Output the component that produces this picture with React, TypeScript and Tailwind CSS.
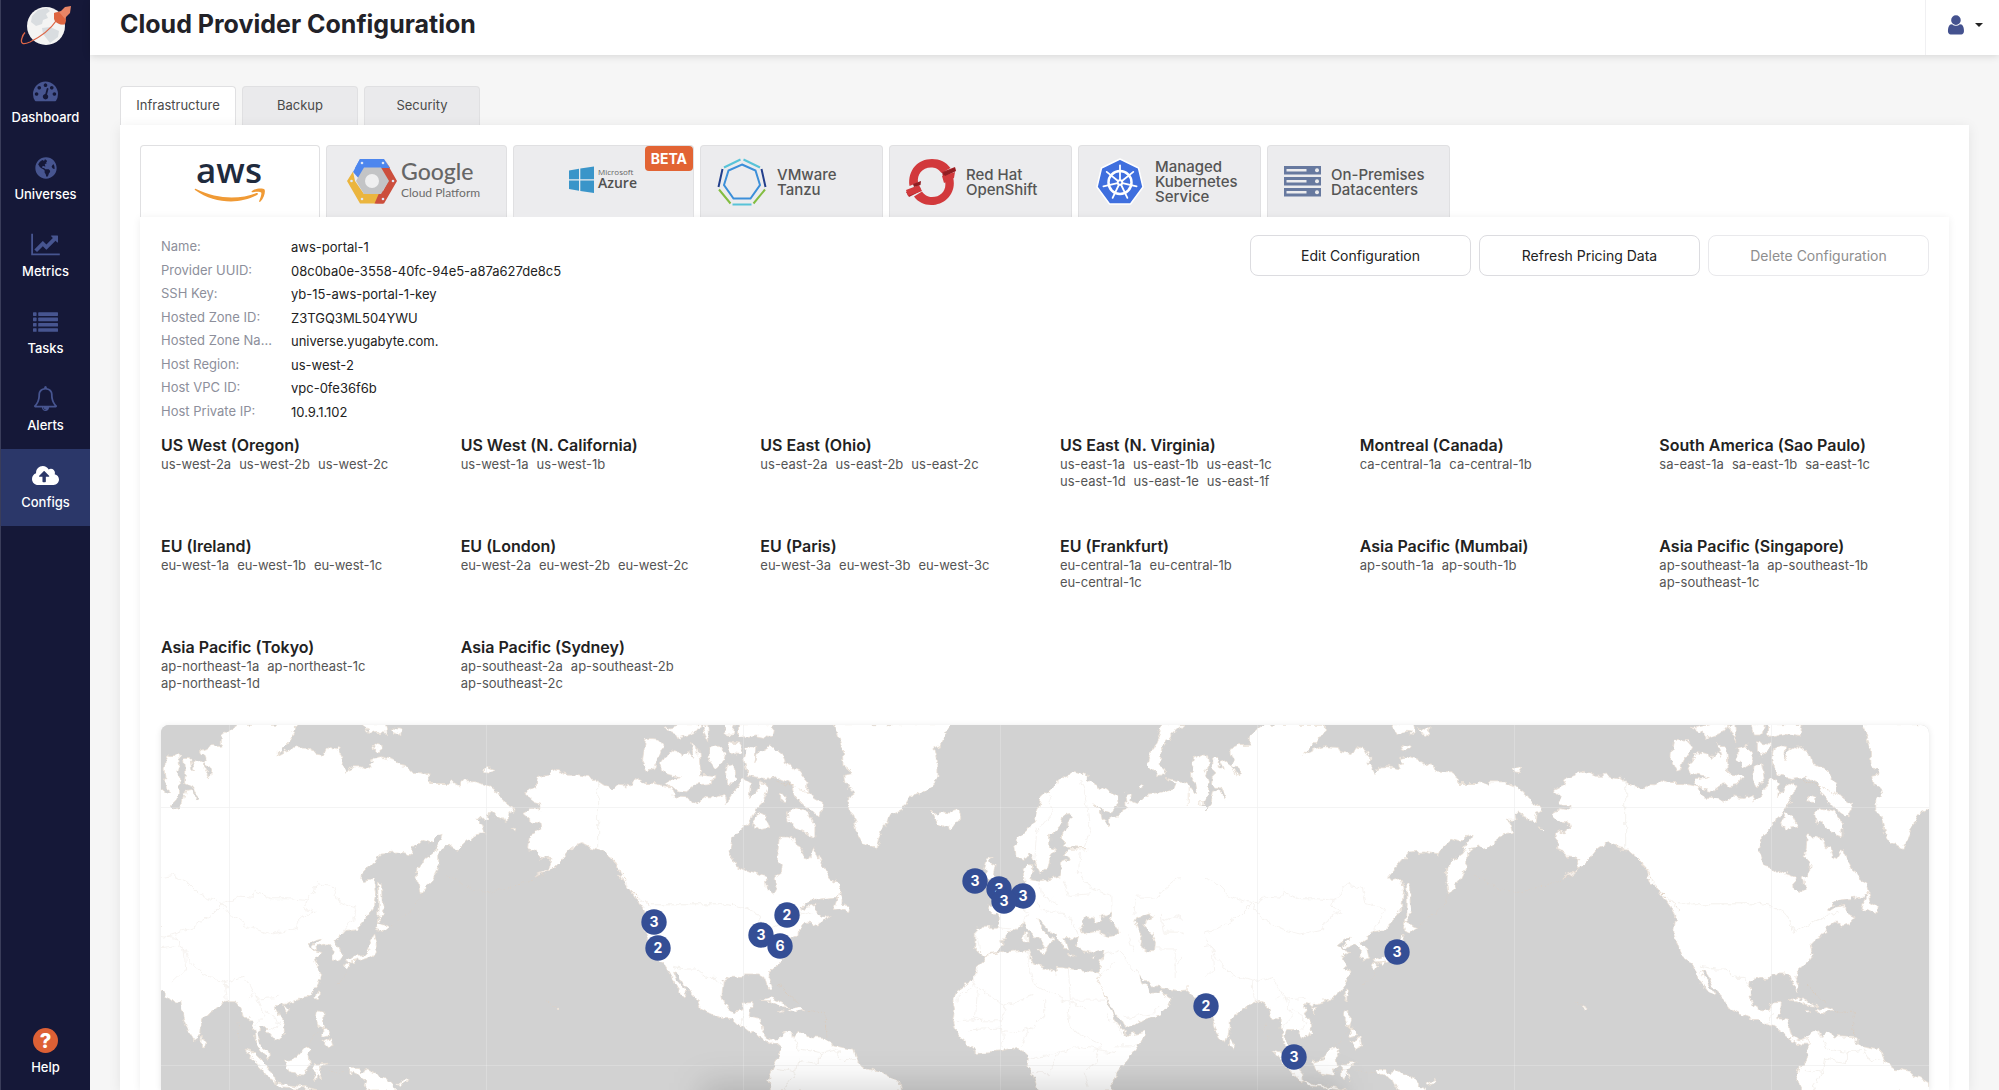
import React from "react";
import { FaCloudUploadAlt, FaGlobeAmericas } from "react-icons/fa";

const FONT = "font-['Inter','Liberation_Sans',sans-serif]";

/* ---------- sidebar icons ---------- */

const GaugeIcon = () => (
  <svg viewBox="0 0 1792 1792" className="size-[25px]" fill="currentColor">
    <path d="M384 1152q0-53-37.5-90.5t-90.5-37.5-90.5 37.5-37.5 90.5 37.5 90.5 90.5 37.5 90.5-37.5 37.5-90.5zm192-448q0-53-37.5-90.5t-90.5-37.5-90.5 37.5-37.5 90.5 37.5 90.5 90.5 37.5 90.5-37.5 37.5-90.5zm428 481l101-382q6-26-7.5-48.5t-38.5-29.5-48 6.5-30 39.5l-101 382q-60 5-107 43.5t-63 98.5q-20 77 20 146t117 89 146-20 89-117q16-60-6-117t-72-91zm660-33q0-53-37.5-90.5t-90.5-37.5-90.5 37.5-37.5 90.5 37.5 90.5 90.5 37.5 90.5-37.5 37.5-90.5zm-640-640q0-53-37.5-90.5t-90.5-37.5-90.5 37.5-37.5 90.5 37.5 90.5 90.5 37.5 90.5-37.5 37.5-90.5zm448 192q0-53-37.5-90.5t-90.5-37.5-90.5 37.5-37.5 90.5 37.5 90.5 90.5 37.5 90.5-37.5 37.5-90.5zm320 448q0 261-141 483-19 29-54 29h-1402q-35 0-54-29-141-221-141-483 0-182 71-348t191-286 286-191 348-71 348 71 286 191 191 286 71 348z" />
  </svg>
);

const ChartIcon = () => (
  <svg viewBox="0 0 2048 1792" className="h-[25px] w-[29px]" fill="currentColor">
    <path d="M2048 1536v128h-2048v-1536h128v1408h1920zM1920 288v435q0 21-19.5 29.5t-35.5-7.5l-121-121-633 633q-10 10-23 10t-23-10l-233-233-416 416-192-192 585-585q10-10 23-10t23 10l233 233 464-464-121-121q-16-16-7.5-35.5t29.5-19.5h435q14 0 23 9t9 23z" />
  </svg>
);

const ListIcon = () => (
  <svg viewBox="0 0 25 20" className="h-5 w-[25px]" fill="currentColor">
    {[0.3, 5.6, 10.9, 16.2].map((y) => (
      <g key={y}>
        <rect x="0" y={y} width="3.6" height="3.6" rx="0.6" />
        <rect x="5.2" y={y} width="19.8" height="3.6" rx="0.6" />
      </g>
    ))}
  </svg>
);

const BellIcon = () => (
  <svg viewBox="0 0 1792 1792" className="size-[25px]" fill="currentColor">
    <path d="M912 1696q0-16-16-16-59 0-101.5-42.5t-42.5-101.5q0-16-16-16t-16 16q0 73 51.5 124.5t124.5 51.5q16 0 16-16zm-666-288h1300q-266-300-266-832 0-51-24-105t-69-103-121.5-80.5-169.5-31.5-169.5 31.5-121.5 80.5-69 103-24 105q0 532-266 832zm1482 0q0 52-38 90t-90 38h-448q0 106-75 181t-181 75-181-75-75-181h-448q-52 0-90-38t-38-90q50-42 91-88t85-119.5 74.5-158.5 50-206 19.5-260q0-152 117-282.5t307-158.5q-8-19-8-39 0-40 28-68t68-28 68 28 28 68q0 20-8 39 190 28 307 158.5t117 282.5q0 139 19.5 260t50 206 74.5 158.5 85 119.5 91 88z" />
  </svg>
);

const UserIcon = () => (
  <svg viewBox="200 100 1400 1600" className="h-5 w-[18px]" fill="currentColor">
    <path d="M1536 1399q0 109-62.5 187t-150.5 78h-854q-88 0-150.5-78t-62.5-187q0-85 8.5-160.5t31.5-152 58.5-131 94-89 134.5-34.5q131 128 313 128t313-128q76 0 134.5 34.5t94 89 58.5 131 31.5 152 8.5 160.5zm-256-887q0 159-112.5 271.5t-271.5 112.5-271.5-112.5-112.5-271.5 112.5-271.5 271.5-112.5 271.5 112.5 112.5 271.5z" />
  </svg>
);

const BrandLogo = () => (
  <svg viewBox="0 0 52 40" className="h-10 w-[52px]" aria-hidden="true">
    <circle cx="26" cy="20" r="19" fill="#f4f4f3" />
    <path d="M12 10l6-6 9-2 3 3-4 3 2 4-5 2-1 4-6 2-5-4z" fill="#d9dde0" />
    <path d="M22 22l8-1 9 4-1 6-8 6-3-4-4-5z" fill="#d9dde0" />
    <path d="M36 15C30 24 20 31 10 36c-7 3-10 2-8-4 .5-2 1.500-4 3-5.500" fill="none" stroke="#dd6647" strokeWidth="1.300" />
    <path d="M34 7l7-2 4-4 6-1-1 7-4 4-1 7c-4 1-9-1-11-6z" fill="#e88566" />
    <path d="M34 7l5-1 7 8-1 4c-5 2-11-2-11-6z" fill="#de6540" />
  </svg>
);

/* ---------- provider logos ---------- */

const AwsLogo = () => (
  <svg viewBox="0 0 72 52" className="h-[52px] w-[72px] overflow-visible" role="img" aria-label="aws">
    <text x="35" y="29" textAnchor="middle" fontFamily="Open Sans, sans-serif" fontWeight="600" fontSize="35" fill="#1f2b3e">
      aws
    </text>
    <path d="M1 36C12 44 25 47.500 37 47.500c9 0 19-2.500 26-6.500 1.500-.8 1.200-2.500-.6-2C47 45 24 46 2 35c-1-.5-1.800.2-1 1z" fill="#f09a35" />
    <path d="M58 37c4-3 11-3.200 12.500-1.500 1.200 1.400-.4 8.600-4 12-.9.800-1.700.3-1.300-.6 1-2.300 2.700-7 2-8.300-.9-1.200-5.500-.8-8.200-.4-1.300.1-1.900-.5-1-1.200z" fill="#f09a35" />
  </svg>
);

const GoogleLogo = () => (
  <svg viewBox="0 0 140 48" className="h-12 w-[140px]" role="img" aria-label="Google Cloud Platform">
    <path d="M13 2h24l6 9H8z" fill="#4d86ee" />
    <path d="M13 2L6 15l8 9 8-13h12z" fill="#4d86ee" />
    <path d="M38 3l12 21-13 22.500h-8L36 34l5-10-8-13h10z" fill="#cc4f3d" />
    <path d="M6 14.500L0 24l13 22.500h16L33 37H17L8 24z" fill="#ebb53e" />
    <path d="M27.500 46.500L33 34h5l-2 12.500z" fill="#cc4f3d" />
    <path d="M17 10.500h17l8 13.500-8 13H17L9 24z" fill="#c3c4c6" />
    <circle cx="25" cy="24" r="7" fill="#efeff0" />
    <g fill="#dfe7f7">
      <circle cx="15" cy="6" r="1.300" />
      <circle cx="36" cy="6" r="1.300" />
      <circle cx="46" cy="24" r="1.300" />
      <circle cx="36" cy="42" r="1.300" />
      <circle cx="15" cy="42" r="1.300" />
      <circle cx="4.500" cy="24" r="1.300" />
    </g>
    <text x="54" y="23" fontFamily="Lato, sans-serif" fontSize="23" fontWeight="500" fill="#666">Google</text>
    <text x="54" y="40" fontFamily="Lato, sans-serif" fontSize="12" fill="#6c6c6c">Cloud Platform</text>
  </svg>
);

const AzureLogo = () => (
  <svg viewBox="0 0 70 28" className="h-7 w-[70px] overflow-visible" role="img" aria-label="Microsoft Azure">
    <path d="M0 4.500l10-1.700v10.400H0zM11.300 2.600L25 .4v12.800H11.300zM0 14.400h10v10.300L0 23.100zM11.300 14.400H25V27l-13.700-2z" fill="#3a95c9" />
    <text x="29" y="9" fontFamily="Open Sans, sans-serif" fontSize="8" fill="#666">Microsoft</text>
    <text x="29" y="22" fontFamily="Open Sans, sans-serif" fontWeight="600" fontSize="14" fill="#505050">Azure</text>
  </svg>
);

const TanzuLogo = () => (
  <svg viewBox="0 0 50 50" className="size-[50px]" fill="none" strokeWidth="2">
    <path d="M25 7.500L38.500 13.500 43 28 33.500 41.500H16.500L7 28 11.500 13.500z" stroke="#3c8fd9" />
    <path d="M7 10.500L23.500 2.500M26.500 2.500L43 10.500M15.500 47.500H34.500" stroke="#58c3d8" />
    <path d="M5.500 12L1.500 30M44.500 12L48.500 30" stroke="#223f8c" />
    <path d="M2 32.500L13.500 46.500M48 32.500L36.500 46.500" stroke="#83bd41" />
  </svg>
);

const OpenShiftLogo = () => (
  <svg viewBox="0 0 50 48" className="h-12 w-[50px]">
    <path d="M3.500 28C1.500 12 12 1 26 1c8 0 14 3 18.500 9l-9 5C32 10.500 29 9.500 25 9.500c-9 0-14 7-13 15z" fill="#d2393c" />
    <path d="M47 19c4 15-7 28-22 28-7 0-13-3-17-8.500l8-5c3 4 6 5.500 10 5.500 9 0 15-7 13-16z" fill="#d2393c" />
    <path d="M36 14l13-5 1 4-13 6zM0 34l14-5 1 4-12 6z" fill="#a82127" />
    <path d="M36 18l13-4-1 6-10 5zM0 32l13-5 3 6-14 5z" fill="#d2393c" />
    <path d="M37 15l12-5 .5 3L39 18zM7 26l8-3-.5 4L8 29z" fill="#8f1e22" />
  </svg>
);

const SPOKES = [0, 1, 2, 3, 4, 5, 6].map((i) => (i * 360) / 7);

const KubernetesLogo = () => (
  <svg viewBox="0 0 50 50" className="size-[50px]" fill="none">
    <path d="M25 2L43.500 11 48 30 35.500 47H14.500L2 30 6.500 11z" fill="#3f6fde" stroke="#fff" strokeWidth="1.500" strokeLinejoin="round" />
    <circle cx="25" cy="25.500" r="11.500" stroke="#fff" strokeWidth="2.500" />
    <circle cx="25" cy="25.500" r="3.200" fill="#fff" />
    {SPOKES.map((a) => (
      <g key={a} transform={`rotate(${a} 25 25.500)`}>
        <path d="M25 23V8.500" stroke="#fff" strokeWidth="1.800" strokeLinecap="round" />
      </g>
    ))}
    <circle cx="25" cy="25.500" r="1.200" fill="#3f6fde" />
  </svg>
);

const ServersIcon = () => (
  <svg viewBox="0 0 37 31" className="h-[31px] w-[37px]">
    {[0, 11, 22].map((y) => (
      <g key={y}>
        <rect x="0" y={y} width="37" height="8.500" fill="#67799f" />
        <rect x="2.500" y={y + 3} width="20" height="2.500" fill="#ececee" />
        <circle cx="33" cy={y + 4.200} r="2" fill="#ececee" />
      </g>
    ))}
  </svg>
);

/* ---------- world map ---------- */

const EAST_ASIA =
  "M-2,215L18,235 24,232 20,205 10,190 8,160 15,125 30,118 50,122 52,150 45,175 52,205 52,235 40,255 28,270 45,282 58,262 65,225 80,222 90,250 95,250 88,222 72,212 62,205 65,170 62,130 75,130 80,160 90,165 80,140 92,135 110,150 125,185 130,160 108,145 115,135 105,105 130,95 155,93 155,65 180,40 195,28 345,28 345,45 325,80 290,120 315,105 345,95 380,97 385,112 415,118 425,95 450,102 460,125 458,145 473,175 485,155 510,155 535,162 530,148 548,143 535,130 560,125 590,135 605,150 625,155 630,168 665,170 680,180 682,205 735,205 740,200 760,215 760,200 800,200 830,215 860,240 870,262 890,275 895,290 880,300 878,322 860,310 832,290 828,300 830,312 800,312 815,325 822,355 800,358 775,380 755,402 740,392 722,395 705,410 705,440 700,465 690,490 678,505 665,532 658,538 655,510 650,490 652,460 665,435 690,415 705,390 716,357 705,360 688,380 665,372 640,400 632,418 600,410 560,413 545,430 505,485 515,498 540,492 545,530 540,580 520,610 495,640 470,645 455,665 440,675 440,685 455,700 460,725 445,735 437,730 438,705 425,685 402,690 395,700 388,695 408,668 395,672 375,690 395,705 410,708 390,728 395,745 408,770 400,805 385,830 370,845 340,855 320,862 318,870 300,860 292,875 300,900 312,925 315,950 300,962 290,970 280,958 262,935 250,935 245,960 252,985 270,1000 275,1030 255,1010 242,985 238,950 232,910 212,908 205,880 190,855 175,855 155,865 130,890 105,912 103,950 95,975 85,975 72,950 60,910 52,880 50,855 38,865 20,845 0,820 -2,820Z";
const EAST_ASIA_ISLES =
  "M550,500L560,505 562,560 568,595 555,600 556,620 550,620 552,560ZM548,620L578,633 560,650 545,645ZM543,655L550,690 540,715 520,728 500,735 480,742 470,735 490,725 512,720 528,700 535,670ZM468,742L480,745 472,765 465,755ZM484,738L500,737 492,747ZM402,825L406,830 400,852 394,840ZM312,873L328,875 320,888ZM105,965L116,985 112,997 102,990ZM215,1003L235,1008 262,1040 290,1075 292,1098 272,1085 250,1055ZM290,1100L330,1108 370,1113 400,1122 300,1112ZM315,1035L340,1028 370,990 385,1000 375,1025 378,1050 365,1078 325,1070ZM398,885L410,890 408,920 416,935 400,930 395,910ZM412,980L435,965 440,990 425,997ZM410,930L425,945 430,960 415,965ZM388,1045L428,1042 403,1055 412,1095 400,1075 395,1098 388,1080ZM472,1058L500,1058 505,1072 530,1065 570,1085 600,1125 530,1125 515,1090 480,1070ZM600,1100L630,1090 625,1100 605,1106ZM537,88L560,95 555,107 540,105ZM515,26L570,26 575,55 550,52 530,58ZM582,38L612,45 608,60 588,52ZM816,163L830,154 845,160 838,172 822,170ZM885,338L903,340 900,347ZM1000,872L1007,876 1002,881Z";
const NORTH_AMERICA =
  "M475,230L500,215 505,190 525,180 545,165 575,180 600,180 640,190 665,210 690,220 700,210 720,212 745,190 765,205 790,205 830,215 840,245 880,248 890,265 915,245 940,250 965,240 970,262 985,235 1000,205 1010,190 1030,205 1025,250 1040,230 1050,200 1065,205 1070,220 1060,250 1045,275 1035,300 1025,310 1015,330 1000,345 985,370 977,405 985,425 992,450 1020,465 1050,478 1065,485 1068,520 1082,533 1090,515 1085,485 1103,470 1105,445 1090,425 1095,400 1098,362 1120,362 1135,375 1140,395 1152,400 1160,425 1172,430 1185,400 1195,430 1210,465 1225,490 1245,505 1250,530 1235,545 1200,550 1170,555 1145,590 1165,575 1190,570 1190,595 1210,605 1220,600 1200,625 1180,632 1178,620 1165,620 1150,630 1145,655 1120,670 1105,690 1112,720 1100,740 1075,765 1072,785 1080,815 1075,825 1065,810 1060,785 1045,775 1015,775 1005,785 980,785 960,795 957,840 965,870 985,885 1005,883 1010,862 1032,860 1025,905 1052,910 1055,940 1060,965 1080,975 1100,968 1100,985 1080,985 1060,974 1035,950 1015,932 995,925 980,908 960,908 930,895 905,880 895,850 870,820 855,790 848,768 836,764 845,790 860,815 874,840 868,843 855,830 840,805 828,770 815,745 795,730 780,690 770,650 775,600 765,580 745,545 730,520 712,500 700,460 685,430 660,405 635,400 610,385 590,395 580,405 565,430 545,455 520,475 495,485 530,465 540,430 510,425 500,405 480,400 485,355 515,340 512,320 490,318 468,295 490,280 515,285 515,270 492,265 490,245Z";
const ARCTIC_ISLES =
  "M770,72L800,75 815,95 795,135 790,160 775,165 762,135ZM830,110L855,115 860,130 875,110 888,130 880,85 900,105 905,180 940,185 930,205 890,210 870,230 840,225 820,205 830,190 855,185 815,175 805,150ZM925,100L950,90 965,120 960,145 940,160 925,135ZM975,80L1005,85 1000,110 985,125 975,110ZM970,150L985,145 992,190 975,215 965,190ZM1015,100L1030,92 1045,95 1040,140 1050,110 1075,92 1105,120 1110,145 1145,165 1170,205 1170,235 1210,270 1195,305 1165,280 1150,260 1135,240 1125,205 1090,185 1060,190 1020,180 1010,130ZM1130,280L1165,290 1185,330 1185,370 1160,350 1120,320 1115,290ZM1032,330L1045,290 1060,300 1075,335 1045,340ZM1100,240L1115,245 1112,262 1102,260ZM1000,26L1085,26 1080,68 1040,60 1000,68ZM960,26L990,26 985,60 965,60ZM905,38L920,26 922,80ZM815,40L870,26 910,26 895,50 850,70 840,50ZM1230,585L1245,530 1252,560 1272,575 1268,595 1245,582ZM1050,854L1075,845 1110,865 1125,875 1100,872 1075,855ZM1120,885L1145,875 1165,885 1140,892ZM1093,887L1108,889 1098,893ZM548,872L556,876 550,882Z";
const GREENLAND =
  "M188,26L480,26 468,60 458,90 440,100 450,150 450,190 430,215 405,235 375,245 355,285 325,300 315,335 300,370 293,403 262,385 245,350 235,300 222,285 222,250 240,235 215,205 212,180 235,175 210,150 208,95Z";
const SOUTH_AMERICA =
  "M45,968L60,950 78,945 88,965 97,945 120,962 165,965 185,990 235,1000 245,1040 270,1060 310,1070 355,1100 358,1128 30,1128 22,1090 35,1050 50,1020 48,985Z";
const EUROPE =
  "M800,170L830,180 830,195 870,220 905,245 905,275 885,290 860,280 842,265 862,290 865,315 882,330 885,308 905,305 910,290 930,280 925,235 940,232 935,262 950,270 975,240 1010,235 1045,222 1050,205 1030,190 1050,195 1080,205 1102,238 1120,255 1120,830 1090,822 1060,825 1020,818 1010,812 990,810 975,795 960,775 965,800 980,815 985,835 1000,835 1018,820 1020,835 1040,850 1030,875 1010,900 970,915 925,938 915,915 895,890 880,855 865,820 850,785 848,775 858,765 868,720 870,705 845,712 815,705 800,690 805,670 790,665 770,670 782,705 770,705 760,685 750,665 735,650 715,625 700,610 705,630 725,655 745,675 735,680 725,705 720,690 700,665 680,640 665,625 640,640 625,655 605,690 600,710 570,718 555,705 543,705 545,635 600,635 600,605 575,575 580,570 600,570 620,555 650,530 670,500 668,460 675,445 690,445 685,490 715,495 760,480 765,440 785,430 770,415 780,402 825,400 765,395 765,350 790,310 785,292 768,295 760,330 735,360 735,400 745,405 730,430 725,460 708,475 695,440 690,415 665,432 650,425 645,375 675,345 700,300 710,245 740,215 770,185Z";
const EUROPE_ISLES =
  "M575,430L590,425 580,440 595,450 590,480 620,510 630,540 600,545 575,548 590,530 580,515 590,505 575,490 568,460ZM545,490L565,485 570,520 545,530ZM435,285L450,300 455,285 480,290 500,285 508,305 495,325 475,340 450,325 440,300ZM1020,26L1070,26 1040,60 1015,105 1012,150 1025,180 1005,180 982,150 990,110ZM672,645L678,650 678,682 668,682 670,660ZM698,698L725,700 718,714ZM780,720L800,722 790,728ZM835,725L850,720 842,730ZM955,212L965,207 970,216 960,225Z";
const AFRICA =
  "M570,720L600,712 640,710 680,705 690,740 720,755 745,772 755,755 790,760 855,768 862,775 850,785 870,830 880,870 900,915 920,945 930,958 975,945 975,960 950,1005 905,1065 892,1100 893,1128 705,1128 690,1075 675,1055 680,1015 645,995 610,1005 550,1010 520,980 495,945 488,915 492,880 488,855 500,825 540,790 545,755 565,735Z";
const INLAND_SEAS =
  "M825,600L845,605 850,620 865,612 862,602 892,590 885,615 905,635 908,655 880,660 850,648 815,655 812,640ZM955,605L985,592 992,605 975,615 970,630 990,655 1000,680 998,705 980,705 965,695 968,665 955,640 948,620Z";

const ASIA_BORDERS =
  "M0,485L30,478 65,495 100,538 160,565 185,605 230,640 285,655 340,640 355,605 390,590 365,575 370,555 330,550 280,550 240,528 235,548 200,545 160,565 130,600 80,640 10,665M370,555L400,505 440,515 450,560 497,578 490,610 460,655M0,700L60,690 70,730 110,780 165,800 215,785 235,830 225,850M60,690L65,760 30,800M165,800L170,855M0,660L40,665 55,690M245,850L300,845M240,830L265,900 240,930M265,880L290,900 300,930 275,945";
const AMERICA_BORDERS =
  "M780,565L975,565 1010,575 1050,600 1065,655 1110,620 1135,610 1145,595M835,752L870,760 895,760 920,785 940,785 960,815M652,190L652,400M1010,895L1000,925M1145,600L1175,590";
const EUROPE_BORDERS =
  "M700,340L695,430M730,240L740,290 700,350M810,195L825,260 835,350 820,395M810,410L805,470 835,520 890,540 890,590M765,490L780,540 835,535M710,500L715,540 760,570M545,640L555,700M600,635L630,640M640,560L680,590 665,625M700,560L720,590 770,590 800,640 805,660M945,600L950,545 1000,545 1060,485 1120,480M1015,600L1020,650 1060,650 1115,680M1000,700L1050,700 1050,790M870,720L905,705 945,755 960,775M930,660L945,705M1015,620L1050,600 1120,640M1050,750L1100,700 1120,720M860,780L900,740M925,905L990,895 1010,870";
const AFRICA_BORDERS =
  "M680,705L680,745 690,800 755,845 825,880M780,760L785,853 870,853M550,755L540,805 495,855M540,805L620,870 690,840M565,910L495,915M620,870L610,915 565,915 545,905 550,820M610,930L615,995M720,850L720,900 680,940 660,990M785,853L780,920 800,950 860,985M680,1030L760,1010 800,990 900,1010M760,1010L730,1070 690,1070M900,990L950,990M860,985L850,1040 820,1070 830,1120M870,900L900,920 915,950M530,945L600,940 640,950 700,930";
const SOUTH_AMERICA_BORDERS =
  "M78,950L100,1000 150,1010 150,1040 95,1030 90,1070 40,1060M150,1010L190,1000 210,1040 240,1030M90,1070L60,1125";
const ISLAND_ARCS =
  "M970,478L900,512 830,532 780,515 725,480M665,535L640,580 580,635M475,770L440,815M410,935L370,990M195,920L200,970M380,1060L470,1070M975,855L1000,872M230,1020L290,1105";
const AMERICA_ARCS = "M685,425L730,520 782,580M1095,808L1140,858M1170,888L1210,890 1212,960M1090,195L1170,235";

const Asia = () => (
  <g transform="translate(-1 -10) scale(.3954 .3342)">
    <path d={EAST_ASIA + EAST_ASIA_ISLES} />
    <path d={ASIA_BORDERS} fill="none" stroke="#f3efea" />
    <path d={ISLAND_ARCS} fill="none" stroke="#dccfc2" strokeDasharray="3 5" />
  </g>
);

const America = () => (
  <g transform="translate(1199 -10) scale(.4075 .3342)">
    <path d={NORTH_AMERICA + ARCTIC_ISLES} />
    <path d={AMERICA_BORDERS} fill="none" stroke="#f0ece6" />
    <path d={AMERICA_ARCS} fill="none" stroke="#dcc9b6" strokeDasharray="4 3" />
  </g>
);

const Atlantic = () => (
  <g transform="translate(599 -10) scale(.3954 .3342)">
    <path d={GREENLAND + SOUTH_AMERICA} />
    <path d={SOUTH_AMERICA_BORDERS} fill="none" stroke="#f0ece6" />
  </g>
);

const EuropeAfrica = () => (
  <g transform="translate(599 -10) scale(.3954 .3342)">
    <path d={EUROPE} />
    <path d={AFRICA} />
    <path d={EUROPE_ISLES} />
    <path d={INLAND_SEAS} fill="#d2d2d2" />
    <path d={EUROPE_BORDERS + AFRICA_BORDERS} fill="none" stroke="#f3efea" />
  </g>
);

const GRATICULE =
  "M68.500 0V365M325.500 0V365M582.500 0V365M839.500 0V365M1096.500 0V365M1353.500 0V365M1610.500 0V365M0 82.500H1768M0 340.500H1768";

const PINS: [number, number, number][] = [
  [493, 197, 3],
  [497, 223, 2],
  [600, 210, 3],
  [626, 190, 2],
  [619, 221, 6],
  [814, 156, 3],
  [838, 164, 3],
  [862, 171, 3],
  [843, 176, 3],
  [1045, 281, 2],
  [1133, 332, 3],
  [1236, 227, 3],
];

const WorldMap = () => (
  <svg
    viewBox="0 0 1768 365"
    preserveAspectRatio="xMidYMin slice"
    className="block min-h-[365px] w-full flex-1 rounded-t-lg bg-[#d2d2d2] shadow-[0_1px_6px_rgba(0,0,0,0.1)]"
    role="img"
    aria-label="Map of provider regions"
  >
    <defs>
      <filter id="coast" x="0" y="0" width="100%" height="100%" filterUnits="userSpaceOnUse">
        <feTurbulence type="fractalNoise" baseFrequency="0.12" numOctaves="3" seed="4" />
        <feDisplacementMap in="SourceGraphic" scale="8" xChannelSelector="R" yChannelSelector="G" />
      </filter>
      <filter id="soft" x="-20%" y="-100%" width="140%" height="300%">
        <feGaussianBlur stdDeviation="16" />
      </filter>
    </defs>
    <g filter="url(#coast)" fill="#fff" stroke="#eadfd3" strokeWidth="2">
      <rect x="-20" y="-20" width="1808" height="405" fill="#d2d2d2" stroke="none" />
      <g transform="translate(-1028 0)">
        <America />
      </g>
      <Asia />
      <Atlantic />
      <EuropeAfrica />
      <g transform="translate(1028 0)">
        <Asia />
        <Atlantic />
      </g>
      <rect x="1022" y="82" width="22" height="178" stroke="none" />
      <America />
    </g>
    <path d={GRATICULE} stroke="#c8c8c8" strokeOpacity="0.25" />
    <path d={GRATICULE} stroke="#fff" strokeOpacity="0.25" />
    <rect x="540" y="358" width="640" height="60" fill="#000" fillOpacity="0.15" filter="url(#soft)" />
    {PINS.map(([x, y, n]) => (
      <g key={`${x}-${y}`}>
        <circle cx={x} cy={y} r="12.700" fill="#344e95" />
        <text x={x} y={y + 5} textAnchor="middle" fontFamily="Inter, sans-serif" fontSize="14" fontWeight="700" fill="#fff">
          {n}
        </text>
      </g>
    ))}
  </svg>
);

/* ---------- data ---------- */

const NAV = [
  { label: "Dashboard", icon: <GaugeIcon /> },
  { label: "Universes", icon: <FaGlobeAmericas className="size-[22px]" /> },
  { label: "Metrics", icon: <ChartIcon /> },
  { label: "Tasks", icon: <ListIcon /> },
  { label: "Alerts", icon: <BellIcon /> },
  { label: "Configs", icon: <FaCloudUploadAlt className="size-[27px]" />, active: true },
];

const DETAILS = [
  ["Name:", "aws-portal-1"],
  ["Provider UUID:", "08c0ba0e-3558-40fc-94e5-a87a627de8c5"],
  ["SSH Key:", "yb-15-aws-portal-1-key"],
  ["Hosted Zone ID:", "Z3TGQ3ML504YWU"],
  ["Hosted Zone Name:", "universe.yugabyte.com."],
  ["Host Region:", "us-west-2"],
  ["Host VPC ID:", "vpc-0fe36f6b"],
  ["Host Private IP:", "10.9.1.102"],
];

const REGIONS: [string, string[]][] = [
  ["US West (Oregon)", ["us-west-2a", "us-west-2b", "us-west-2c"]],
  ["US West (N. California)", ["us-west-1a", "us-west-1b"]],
  ["US East (Ohio)", ["us-east-2a", "us-east-2b", "us-east-2c"]],
  ["US East (N. Virginia)", ["us-east-1a", "us-east-1b", "us-east-1c", "us-east-1d", "us-east-1e", "us-east-1f"]],
  ["Montreal (Canada)", ["ca-central-1a", "ca-central-1b"]],
  ["South America (Sao Paulo)", ["sa-east-1a", "sa-east-1b", "sa-east-1c"]],
  ["EU (Ireland)", ["eu-west-1a", "eu-west-1b", "eu-west-1c"]],
  ["EU (London)", ["eu-west-2a", "eu-west-2b", "eu-west-2c"]],
  ["EU (Paris)", ["eu-west-3a", "eu-west-3b", "eu-west-3c"]],
  ["EU (Frankfurt)", ["eu-central-1a", "eu-central-1b", "eu-central-1c"]],
  ["Asia Pacific (Mumbai)", ["ap-south-1a", "ap-south-1b"]],
  ["Asia Pacific (Singapore)", ["ap-southeast-1a", "ap-southeast-1b", "ap-southeast-1c"]],
  ["Asia Pacific (Tokyo)", ["ap-northeast-1a", "ap-northeast-1c", "ap-northeast-1d"]],
  ["Asia Pacific (Sydney)", ["ap-southeast-2a", "ap-southeast-2b", "ap-southeast-2c"]],
];

/* ---------- pieces ---------- */

const TAB = "rounded-t border border-b-0 border-[#e0e0e2]";
const NAV_LABEL = "text-[13px] leading-4 font-medium text-white";

const ProviderTab = ({ icon, lines }: { icon: React.ReactNode; lines: string[] }) => (
  <button role="tab" aria-selected="false" className={`${TAB} flex h-[72px] w-[183px] items-center gap-2.5 bg-[#ececee] pl-4 text-left`}>
    {icon}
    <span className="flex flex-col text-[15px] leading-[15px] font-medium text-[#555]">
      {lines.map((l) => (
        <span key={l}>{l}</span>
      ))}
    </span>
  </button>
);

const ActionButton = ({ children, disabled }: { children: string; disabled?: boolean }) => (
  <button
    disabled={disabled}
    className="h-[41px] w-[221px] rounded-lg border border-[#dcdce0] bg-white text-sm text-[#222] disabled:border-[#e9e9ec] disabled:text-[#8e8e8e]"
  >
    {children}
  </button>
);

export default function App() {
  return (
    <div className={`flex min-h-screen bg-[#f6f6f6] ${FONT} text-[#222]`}>
      <aside className="flex w-[90px] shrink-0 flex-col border-l border-[#3a3d5a] bg-[#151838]">
        <a href="#home" aria-label="Home" className="flex h-16 justify-center pt-1.5">
          <BrandLogo />
        </a>
        <nav className="flex flex-col">
          {NAV.map((n) => (
            <a
              key={n.label}
              href={`#${n.label.toLowerCase()}`}
              className={`flex h-[77px] flex-col items-center pt-3.5 ${n.active ? "bg-[#2b3769] text-white" : "text-[#475590]"}`}
            >
              <span className="flex h-[25px] items-center">{n.icon}</span>
              <span className={`mt-1.5 ${NAV_LABEL}`}>{n.label}</span>
            </a>
          ))}
        </nav>
        <a href="#help" className="mt-auto mb-[15px] flex flex-col items-center">
          <span className="flex size-[25px] items-center justify-center rounded-full bg-[#dd6035] text-[20px] leading-none font-extrabold text-white">?</span>
          <span className={`mt-1.5 ${NAV_LABEL}`}>Help</span>
        </a>
      </aside>

      <div className="flex min-w-0 flex-1 flex-col">
        <header className="z-10 flex h-[55px] shrink-0 items-stretch justify-between bg-white pl-[30px] shadow-[0_1px_8px_rgba(0,0,0,0.14)]">
          <h1 className="pt-1.5 text-[25px] leading-9 font-bold text-[#222228]">Cloud Provider Configuration</h1>
          <button aria-label="User menu" className="flex w-[74px] items-center gap-2.5 border-l border-[#f0f0f2] pb-1.5 pl-[21px] text-[#44528f]">
            <UserIcon />
            <span className="border-x-4 border-t-4 border-x-transparent border-t-[#222]" />
          </button>
        </header>

        <main className="flex flex-1 flex-col px-[30px] pt-[31px]">
          <div role="tablist" className="flex gap-1.5 text-[13px] text-[#4a4a4a]">
            <button role="tab" aria-selected="true" className={`${TAB} h-[39px] w-[116px] bg-white`}>Infrastructure</button>
            <button role="tab" aria-selected="false" className={`${TAB} h-[39px] w-[116px] bg-[#eaeaec]`}>Backup</button>
            <button role="tab" aria-selected="false" className={`${TAB} h-[39px] w-[116px] bg-[#eaeaec]`}>Security</button>
          </div>

          <section className="flex flex-1 flex-col bg-white px-5 pt-5 shadow-[0_2px_12px_rgba(0,0,0,0.08)]">
            <div role="tablist" className="flex gap-1.5">
              <button role="tab" aria-selected="true" className={`${TAB} flex h-[72px] w-[180px] justify-center bg-white pt-2`}>
                <AwsLogo />
              </button>
              <button role="tab" aria-selected="false" className={`${TAB} flex h-[72px] w-[181px] items-center bg-[#ececee] pb-0.5 pl-5`}>
                <GoogleLogo />
              </button>
              <button role="tab" aria-selected="false" className={`${TAB} relative flex h-[72px] w-[181px] items-center justify-center bg-[#ececee] pb-1`}>
                <AzureLogo />
                <span className="absolute top-0 right-0 rounded bg-[#e26434] px-1.5 text-sm leading-[25px] font-bold text-white">BETA</span>
              </button>
              <ProviderTab icon={<TanzuLogo />} lines={["VMware", "Tanzu"]} />
              <ProviderTab icon={<OpenShiftLogo />} lines={["Red Hat", "OpenShift"]} />
              <ProviderTab icon={<KubernetesLogo />} lines={["Managed", "Kubernetes", "Service"]} />
              <ProviderTab icon={<ServersIcon />} lines={["On-Premises", "Datacenters"]} />
            </div>

            <div className="flex flex-1 flex-col bg-white pt-[18px] pr-5 pl-[21px] shadow-[0_1px_8px_rgba(0,0,0,0.07)]">
              <div className="flex items-start justify-between">
                <dl className="grid h-[188px] auto-rows-fr grid-cols-[112px_auto] gap-x-[18px] text-[13px] leading-[22px]">
                  {DETAILS.map(([k, v]) => (
                    <React.Fragment key={k}>
                      <dt className="truncate text-[#8d8f9b]">{k}</dt>
                      <dd className="pt-px text-[#222]">{v}</dd>
                    </React.Fragment>
                  ))}
                </dl>
                <div className="flex gap-2">
                  <ActionButton>Edit Configuration</ActionButton>
                  <ActionButton>Refresh Pricing Data</ActionButton>
                  <ActionButton disabled>Delete Configuration</ActionButton>
                </div>
              </div>

              <div className="mt-3 grid auto-rows-[88px] grid-cols-6 gap-x-[30px] gap-y-[13px]">
                {REGIONS.map(([name, zones]) => (
                  <div key={name}>
                    <h2 className="text-base leading-[21px] font-semibold text-[#222]">{name}</h2>
                    <ul className="flex flex-wrap gap-x-2 pr-[30px] text-[13px] leading-[17px] text-[#555]">
                      {zones.map((z) => (
                        <li key={z}>{z}</li>
                      ))}
                    </ul>
                  </div>
                ))}
              </div>
              <WorldMap />
            </div>
          </section>
        </main>
      </div>
    </div>
  );
}
